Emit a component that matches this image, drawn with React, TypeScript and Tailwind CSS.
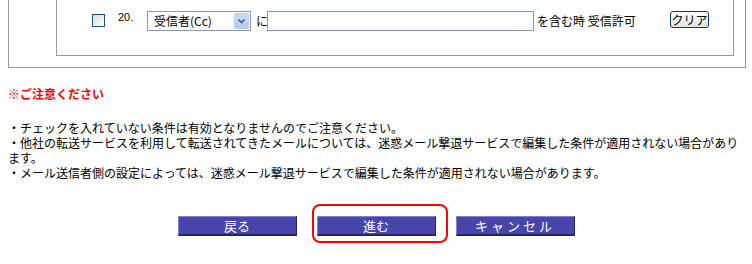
import React from 'react';

const FONT = '"Noto Sans CJK JP", "Liberation Sans", sans-serif';

const Checkbox: React.FC = () => (
  <div className="w-[13px] h-[13px] border border-[#1c5180] bg-gradient-to-br from-[#dcdcd7] to-white" />
);

const SelectBox: React.FC<{ value: string }> = ({ value }) => (
  <div className="w-[104px] h-[20px] border border-[#7f9db9] bg-white flex items-stretch p-[1px]">
    <div className="flex-1 flex items-center pl-[5px] text-[12px] leading-none text-black">{value}</div>
    <div className="w-[15px] border border-[#b9cdf6] rounded-[2px] bg-gradient-to-b from-[#cddcfc] to-[#b4c9f5] flex items-center justify-center">
      <svg width="7" height="5" viewBox="0 0 7 5">
        <path d="M0.5 0.5 L3.5 3.5 L6.5 0.5" fill="none" stroke="#4d6185" strokeWidth="1.6" />
      </svg>
    </div>
  </div>
);

const NavButton: React.FC<{ label: string; tracking?: string }> = ({ label, tracking }) => (
  <button
    className={`w-[119px] h-[20px] bg-[#4747a9] border-t border-l border-t-[#8282d2] border-l-[#8282d2] border-b-2 border-r border-b-[#24245e] border-r-[#24245e] text-white text-[13px] leading-none flex items-center justify-center ${tracking ?? ''}`}
  >
    {label}
  </button>
);

export default function App() {
  return (
    <div className="w-[752px] h-[264px] bg-white overflow-hidden text-black" style={{ fontFamily: FONT }}>
      <div className="px-2">
        {/* outer frame, top cut off */}
        <div className="w-[738px] border-x border-b border-[#999999] pb-[11px]">
          <div className="ml-[47px] w-[678px] h-[56px] border-x border-b border-[#999999]">
            <div className="flex items-start pt-[11px]">
              <div className="ml-[35px] mt-[3px]">
                <Checkbox />
              </div>
              <div className="ml-[13px] w-[29px] text-[11px] leading-none pt-[1px]" style={{ fontFamily: '"Liberation Sans", sans-serif' }}>
                20.
              </div>
              <SelectBox value="受信者(Cc)" />
              <div className="ml-[5px] w-[11px] h-[20px] flex items-center text-[12px]">に</div>
              <div className="w-[267px] h-[20px] border border-[#7f9db9] bg-white" />
              <div className="ml-[3px] w-[133px] h-[20px] flex items-center text-[12px] whitespace-nowrap">
                を含む時 受信許可
              </div>
              <button className="w-[39px] h-[17px] rounded-[3px] border border-[#003c74] bg-gradient-to-b from-white to-[#e6e3d6] text-[12px] leading-none flex items-center justify-center">
                クリア
              </button>
            </div>
          </div>
        </div>

        <div className="mt-[18px] text-[12px] leading-[15px] font-bold text-[#ff0000]">※ご注意ください</div>

        <div className="mt-[19px] text-[12px] leading-[15px] whitespace-nowrap">
          <div>・チェックを入れていない条件は有効となりませんのでご注意ください。</div>
          <div>
            ・他社の転送サービスを利用して転送されてきたメールについては、迷惑メール撃退サービスで編集した条件が適用されない場合があり
            <br />
            ます。
          </div>
          <div>・メール送信者側の設定によっては、迷惑メール撃退サービスで編集した条件が適用されない場合があります。</div>
        </div>
      </div>

      <div className="mt-[36px] flex justify-center gap-[20px]">
        <NavButton label="戻る" />
        <div className="relative">
          <NavButton label="進む" />
          <div className="absolute left-[-5px] top-[-12px] w-[136px] h-[39px] border-2 border-[#ff0000] rounded-[8px] pointer-events-none" />
        </div>
        <NavButton label="キャンセル" tracking="tracking-[3px]" />
      </div>
    </div>
  );
}
